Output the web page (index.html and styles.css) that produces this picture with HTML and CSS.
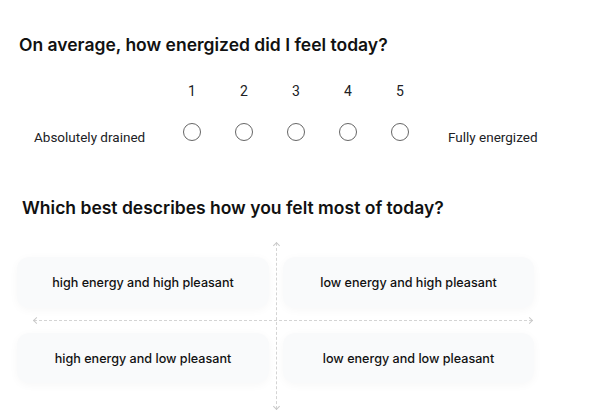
FILE: index.html
```html
<!DOCTYPE html>
<html>
<head>
<meta charset="utf-8">
<link rel="stylesheet" href="styles.css">
</head>
<body>
<section class="q1">
  <h1 class="q1-title">On average, how energized did I feel today?</h1>
  <div class="scale">
    <span class="blank"></span>
    <span class="num">1</span><span class="num">2</span><span class="num">3</span><span class="num">4</span><span class="num">5</span>
    <span class="blank"></span>
    <span class="end-label left">Absolutely drained</span>
    <span class="radio-cell"><span class="radio"></span></span>
    <span class="radio-cell"><span class="radio"></span></span>
    <span class="radio-cell"><span class="radio"></span></span>
    <span class="radio-cell"><span class="radio"></span></span>
    <span class="radio-cell"><span class="radio"></span></span>
    <span class="end-label right">Fully energized</span>
  </div>
</section>
<section class="q2">
  <h2 class="q2-title">Which best describes how you felt most of today?</h2>
  <div class="quad">
    <div class="axis-v"><span class="arrow-up"></span><span class="arrow-down"></span></div>
    <div class="axis-h"><span class="arrow-left"></span><span class="arrow-right"></span></div>
    <div class="card">high energy and high pleasant</div>
    <div class="card">low energy and high pleasant</div>
    <div class="card">high energy and low pleasant</div>
    <div class="card">low energy and low pleasant</div>
  </div>
</section>
</body>
</html>
```

FILE: styles.css
```css
html, body {
  margin: 0;
  padding: 0;
  background: #ffffff;
  width: 593px;
  height: 410px;
  overflow: hidden;
}
body {
  font-family: Roboto, "Liberation Sans", sans-serif;
  color: #202124;
}
.q1 {
  padding: 33px 0 0 19px;
}
.q1-title {
  margin: 0;
  font-family: Inter, Roboto, sans-serif;
  font-weight: 600;
  font-size: 17.5px;
  line-height: 24px;
  color: #111;
}
.scale {
  margin-top: 24px;
  margin-left: 15px;
  display: grid;
  grid-template-columns: 132px repeat(5, 52px) 1fr;
  grid-template-rows: 20px 22px;
  row-gap: 20px;
  align-items: center;
}
.num {
  text-align: center;
  font-size: 14px;
  color: #202124;
}
.end-label {
  font-size: 13.5px;
  color: #202124;
  position: relative;
  top: 5px;
}
.end-label.right {
  padding-left: 22px;
}
.radio-cell {
  display: flex;
  justify-content: center;
}
.radio {
  width: 16px;
  height: 16px;
  border: 1.6px solid #666;
  border-radius: 50%;
}
.q2 {
  padding: 53px 0 0 22px;
}
.q2-title {
  margin: 0;
  font-family: Inter, Roboto, sans-serif;
  font-weight: 600;
  font-size: 17.5px;
  line-height: 24px;
  color: #111;
}
.quad {
  position: relative;
  margin: 23px 0 0 -5px;
  width: 518px;
  padding-top: 14px;
  display: grid;
  grid-template-columns: 252px 251px;
  grid-template-rows: 51px 50px;
  column-gap: 14px;
  row-gap: 25px;
}
.card {
  position: relative;
  z-index: 1;
  background: #f9fafb;
  border-radius: 12px;
  box-shadow: 0 2px 10px rgba(0, 0, 0, 0.035);
  display: flex;
  align-items: center;
  justify-content: center;
  font-family: Inter, Roboto, sans-serif;
  font-weight: 500;
  font-size: 12.6px;
  color: #111;
}
.axis-v {
  position: absolute;
  left: 259px;
  top: 0;
  height: 166px;
  border-left: 1px dashed #d4d4d4;
}
.axis-h {
  position: absolute;
  left: 17px;
  top: 77px;
  width: 498px;
  border-top: 1px dashed #d4d4d4;
}
.arrow-up, .arrow-down, .arrow-left, .arrow-right {
  position: absolute;
  width: 4px;
  height: 4px;
  border-color: #c8c8c8;
  border-style: solid;
  border-width: 0;
}
.arrow-up {
  top: 0;
  left: -3.5px;
  border-top-width: 1px;
  border-left-width: 1px;
  transform: rotate(45deg);
}
.arrow-down {
  bottom: 0;
  left: -3.5px;
  border-bottom-width: 1px;
  border-right-width: 1px;
  transform: rotate(45deg);
}
.arrow-left {
  left: 0;
  top: -3.5px;
  border-bottom-width: 1px;
  border-left-width: 1px;
  transform: rotate(45deg);
}
.arrow-right {
  right: 0;
  top: -3.5px;
  border-top-width: 1px;
  border-right-width: 1px;
  transform: rotate(45deg);
}
```
